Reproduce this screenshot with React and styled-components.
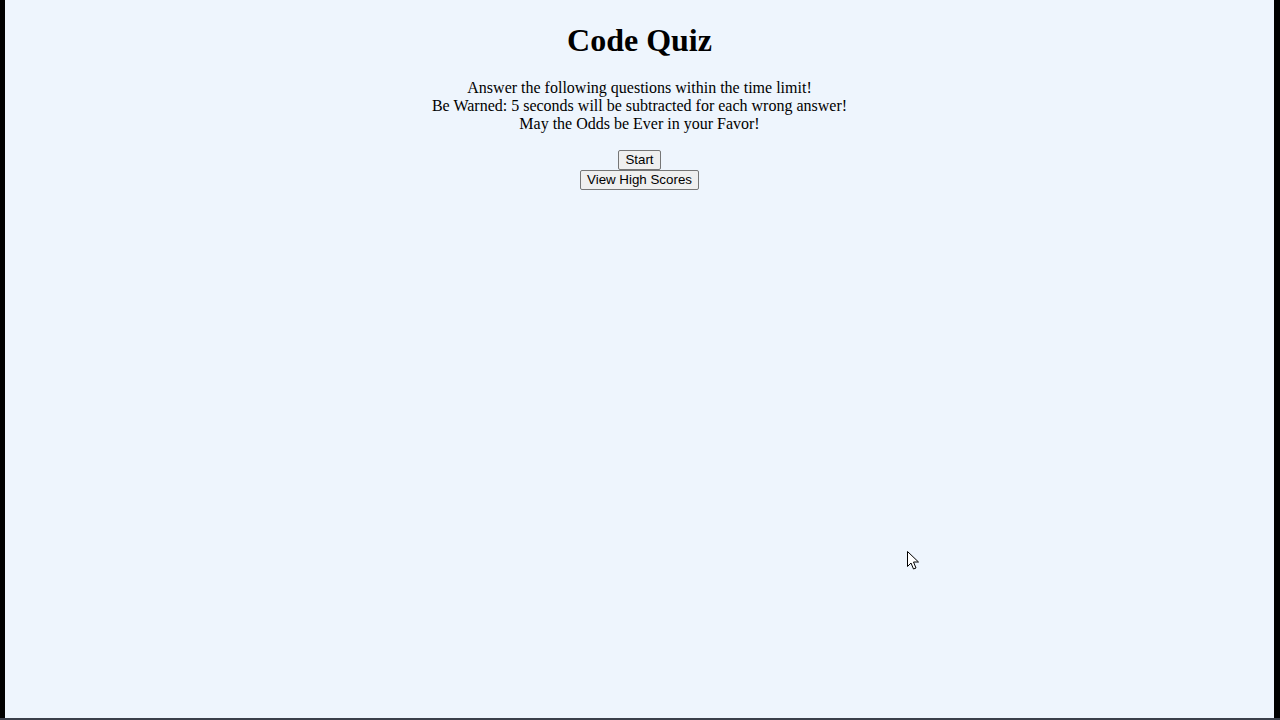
import React from "react";
import styled, { createGlobalStyle } from "styled-components";

const Global = createGlobalStyle`
  html, body { margin: 0; padding: 0; background: #000; }
  body { width: 1280px; height: 720px; overflow: hidden; }
`;

const Frame = styled.div`
  position: relative;
  box-sizing: border-box;
  margin: 0 6px 0 5px;
  height: 718px;
  background: #eef5fd;
  font-family: "Liberation Serif", "Times New Roman", serif;
  color: #000;
  display: flow-root;
  text-align: center;
`;

const BottomEdge = styled.div`
  height: 2px;
  background: #3a3f4a;
`;

const Title = styled.h1`
  font-size: 32px;
  font-weight: bold;
  margin: 22px 0 20px;
  line-height: 37px;
`;

const Intro = styled.p`
  font-size: 16px;
  line-height: 18px;
  margin: 0 0 17px;
`;

const Buttons = styled.div`
  display: flex;
  flex-direction: column;
  align-items: center;
`;

const Button = styled.button`
  font-family: "Liberation Sans", Arial, sans-serif;
  font-size: 13.33px;
  line-height: 16px;
  color: #000;
  background: #efefef;
  border: 1px solid #767676;
  border-radius: 2px;
  padding: 1px 6px;
  margin: 0;
  height: 20px;
  box-sizing: border-box;
  cursor: default;
`;

const Cursor = styled.svg`
  position: absolute;
  left: 902px;
  top: 551px;
  width: 13px;
  height: 20px;
  pointer-events: none;
`;

export default function App() {
  return (
    <>
      <Global />
      <Frame>
        <Title>Code Quiz</Title>
        <Intro>
          Answer the following questions within the time limit!
          <br />
          Be Warned: 5 seconds will be subtracted for each wrong answer!
          <br />
          May the Odds be Ever in your Favor!
        </Intro>
        <Buttons>
          <Button>Start</Button>
          <Button>View High Scores</Button>
        </Buttons>
        <Cursor viewBox="0 0 13 20">
          <path
            d="M0.5 0.5 L0.5 15.5 L4 12 L6.5 18 L9 17 L6.5 11 L11.5 11 Z"
            fill="#fff"
            stroke="#000"
            strokeWidth="1"
          />
        </Cursor>
      </Frame>
      <BottomEdge />
    </>
  );
}
